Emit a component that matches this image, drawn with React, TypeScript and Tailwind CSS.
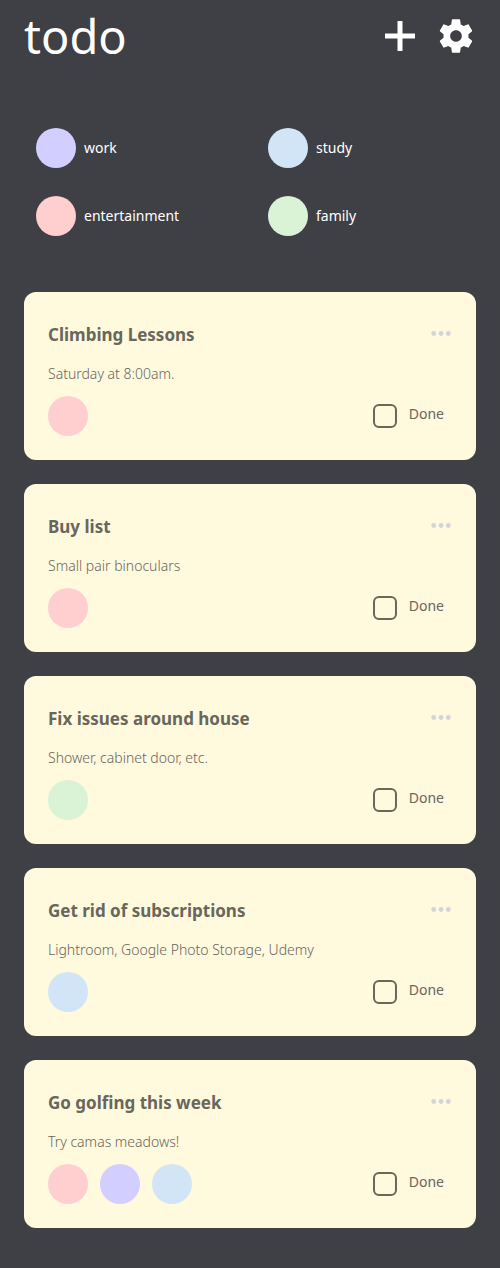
import { useState } from "react";

type Tag = "work" | "study" | "entertainment" | "family";

const tagColors: Record<Tag, string> = {
  work: "bg-[#d2ceff]",
  study: "bg-[#d1e5f7]",
  entertainment: "bg-[#ffcecf]",
  family: "bg-[#daf2d6]",
};

const tags: Tag[] = ["work", "study", "entertainment", "family"];

type Todo = { title: string; note: string; tags: Tag[] };

const todos: Todo[] = [
  { title: "Climbing Lessons", note: "Saturday at 8:00am.", tags: ["entertainment"] },
  { title: "Buy list", note: "Small pair binoculars", tags: ["entertainment"] },
  { title: "Fix issues around house", note: "Shower, cabinet door, etc.", tags: ["family"] },
  { title: "Get rid of subscriptions", note: "Lightroom, Google Photo Storage, Udemy", tags: ["study"] },
  { title: "Go golfing this week", note: "Try camas meadows!", tags: ["entertainment", "work", "study"] },
];

function PlusIcon() {
  return (
    <svg viewBox="0 0 24 24" className="size-10" fill="currentColor" aria-hidden="true">
      <path d="M10.5 3h3v7.5H21v3h-7.5V21h-3v-7.5H3v-3h7.5z" />
    </svg>
  );
}

function GearIcon() {
  return (
    <svg viewBox="0 0 24 24" className="size-10" fill="currentColor" aria-hidden="true">
      <path d="M19.43 12.98c.04-.32.07-.64.07-.98s-.03-.66-.07-.98l2.11-1.65c.19-.15.24-.42.12-.64l-2-3.46c-.12-.22-.39-.3-.61-.22l-2.49 1c-.52-.4-1.08-.73-1.69-.98l-.38-2.65C14.46 2.18 14.25 2 14 2h-4c-.25 0-.46.18-.49.42l-.38 2.65c-.61.25-1.17.59-1.69.98l-2.49-1c-.23-.09-.49 0-.61.22l-2 3.46c-.13.22-.07.49.12.64l2.11 1.65c-.04.32-.07.65-.07.98s.03.66.07.98l-2.11 1.65c-.19.15-.24.42-.12.64l2 3.46c.12.22.39.3.61.22l2.49-1c.52.4 1.08.73 1.69.98l.38 2.65c.03.24.24.42.49.42h4c.25 0 .46-.18.49-.42l.38-2.65c.61-.25 1.17-.59 1.69-.98l2.49 1c.23.09.49 0 .61-.22l2-3.46c.12-.22.07-.49-.12-.64l-2.11-1.65zM12 15.5c-1.93 0-3.5-1.57-3.5-3.5s1.57-3.5 3.5-3.5 3.5 1.57 3.5 3.5-1.57 3.5-3.5 3.5z" />
    </svg>
  );
}

function DotsIcon() {
  return (
    <svg viewBox="0 0 20 6" className="h-[6px] w-5" fill="currentColor" aria-hidden="true">
      <circle cx="2.7" cy="2.5" r="2.4" />
      <circle cx="10" cy="2.5" r="2.4" />
      <circle cx="17.3" cy="2.5" r="2.4" />
    </svg>
  );
}

function Card({ todo }: { todo: Todo }) {
  const [done, setDone] = useState(false);
  return (
    <li className="flex flex-col gap-3 rounded-xl bg-[#fff9de] p-6 text-[#69665c]">
      <div className="flex h-9 items-center justify-between">
        <h2 className="pt-0.5 text-[17px] leading-6 font-bold">{todo.title}</h2>
        <button type="button" aria-label="More options" className="pr-px text-[#d1d5db]">
          <DotsIcon />
        </button>
      </div>
      <p className="text-[14px] leading-5 font-light">{todo.note}</p>
      <div className="flex items-center justify-between">
        <div className="flex gap-3">
          {todo.tags.map((tag) => (
            <span key={tag} className={`size-10 rounded-full ${tagColors[tag]}`} />
          ))}
        </div>
        <label className="flex gap-3 pr-2 text-[14px] leading-5">
          <input
            type="checkbox"
            checked={done}
            onChange={(e) => setDone(e.target.checked)}
            className="size-6 appearance-none rounded-md border-2 border-[#69665c] checked:bg-[#69665c]"
          />
          Done
        </label>
      </div>
    </li>
  );
}

export default function App() {
  return (
    <div className="min-h-screen bg-[#3f4045] px-6 pb-10 font-['Noto_Sans','Open_Sans',sans-serif]">
      <header className="flex h-[72px] items-center justify-between text-white">
        <h1 className="text-[47px] leading-[72px]">todo</h1>
        <div className="flex gap-4">
          <button type="button" aria-label="Add todo">
            <PlusIcon />
          </button>
          <button type="button" aria-label="Settings">
            <GearIcon />
          </button>
        </div>
      </header>
      <nav className="my-14 grid grid-cols-2 gap-x-6 gap-y-7 pl-3">
        {tags.map((tag) => (
          <button key={tag} type="button" className="flex items-center gap-2 text-[14px] leading-5 text-white">
            <span className={`size-10 rounded-full ${tagColors[tag]}`} />
            {tag}
          </button>
        ))}
      </nav>
      <ul className="flex flex-col gap-6">
        {todos.map((todo) => (
          <Card key={todo.title} todo={todo} />
        ))}
      </ul>
    </div>
  );
}
